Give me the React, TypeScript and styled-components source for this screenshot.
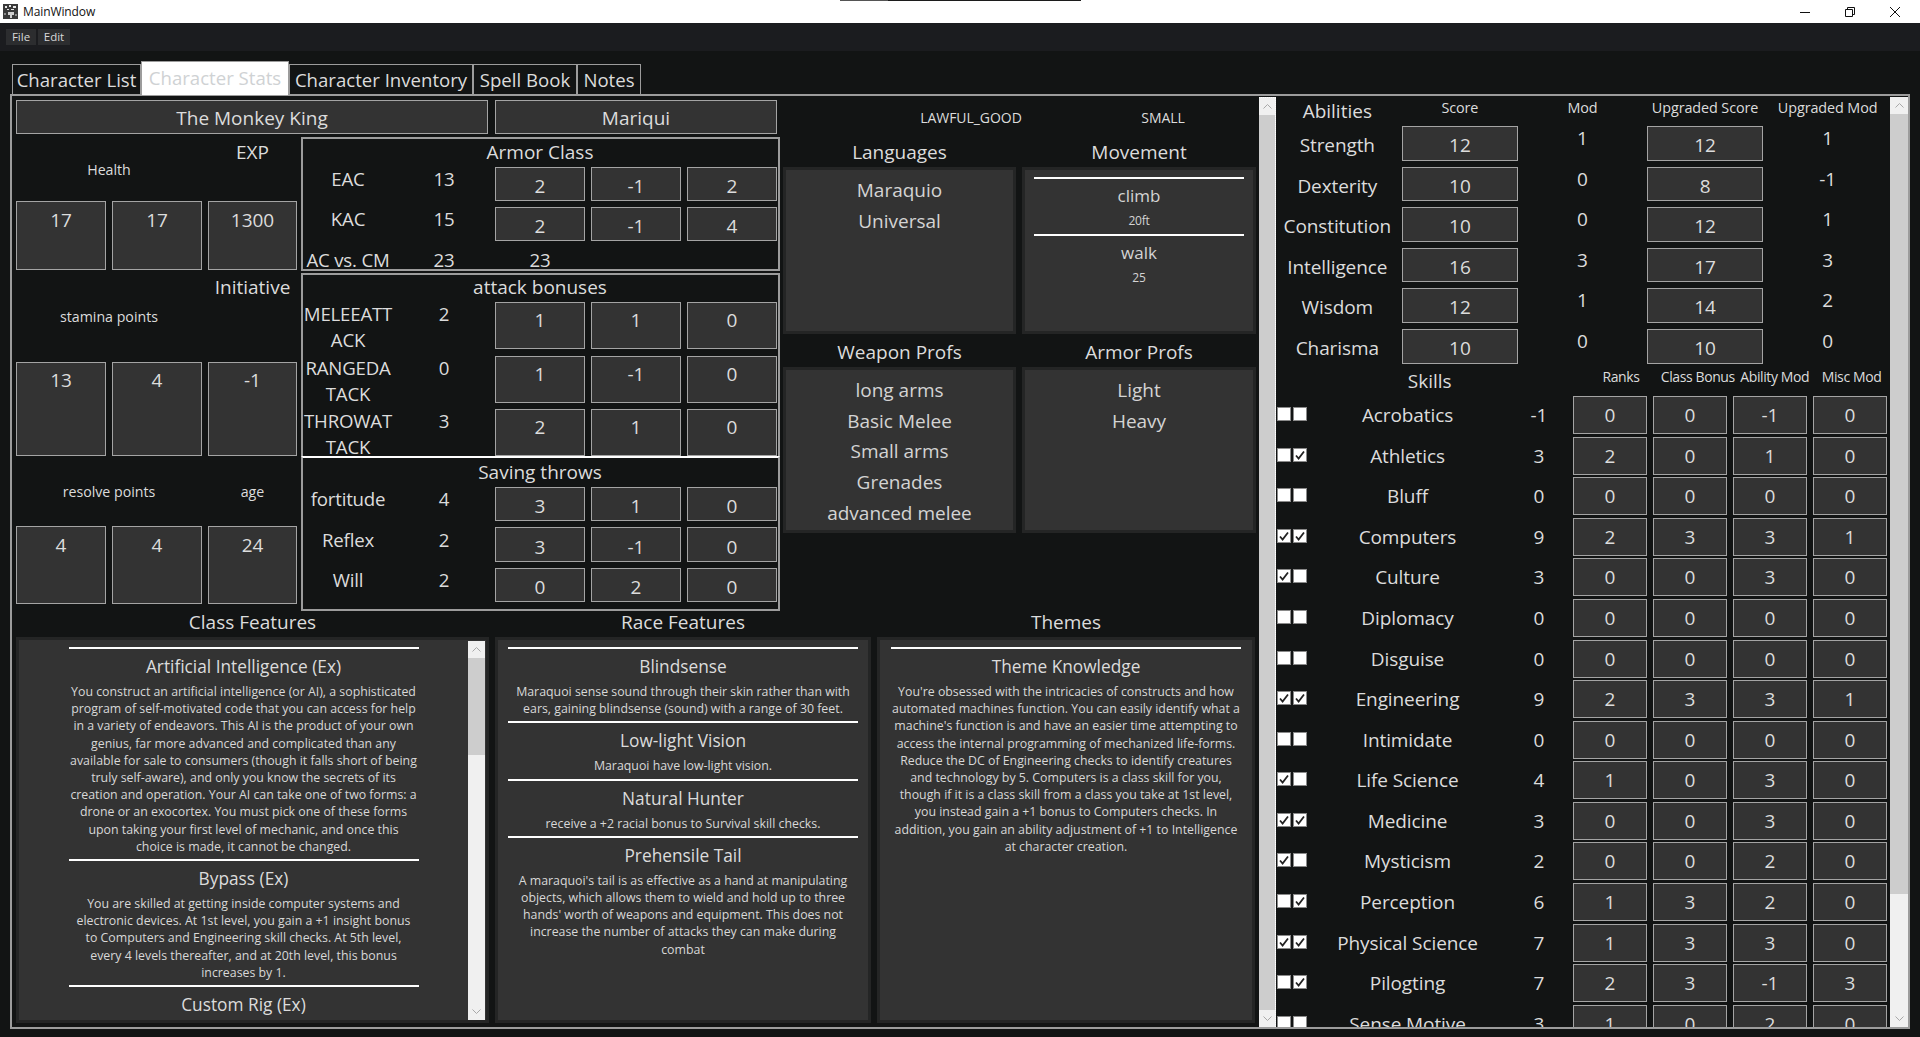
import styled, { createGlobalStyle } from "styled-components";

const GlobalStyle = createGlobalStyle`
    html, body { margin: 0; padding: 0; height: 100%; overflow: hidden; background: #121414; }
    body { font-family: "Open Sans", "Noto Sans", sans-serif; color: #dcdcdc; }
    * { box-sizing: border-box; }
`;

const Window = styled.div`
    position: relative;
    width: 1920px;
    height: 1037px;
    overflow: hidden;
    background: #121414;
`;

const TitleBar = styled.div`
    height: 23px;
    background: #fff;
    color: #111;
    display: flex;
    align-items: center;
    padding-left: 3px;
    font-size: 12px;
    letter-spacing: -0.1px;
`;

const TitleText = styled.span`
    margin-left: 5px;
`;

const TitleControls = styled.div`
    margin-left: auto;
    display: flex;
    align-items: center;
    padding-right: 3px;
`;

const ControlButton = styled.div`
    width: 45px;
    height: 23px;
    display: flex;
    align-items: center;
    justify-content: center;
`;

const DragStrip = styled.div`
    position: absolute;
    top: 0;
    left: 840px;
    width: 241px;
    height: 1px;
    background: linear-gradient(90deg, #555 0 48px, #1c1c1c 48px);
`;

const MenuBar = styled.div`
    height: 28px;
    background: #1b1c1f;
    display: flex;
    align-items: center;
    gap: 2px;
    padding: 0 6px;
`;

const MenuItem = styled.div<{ $w: number }>`
    width: ${p => p.$w}px;
    height: 16px;
    background: #2c2d2f;
    color: #d8d8d8;
    font-size: 11.5px;
    line-height: 16px;
    text-align: center;
`;

const TabBar = styled.div`
    position: relative;
    z-index: 1;
    display: flex;
    align-items: flex-end;
    height: 34px;
    margin: 10px 0 -1px 12px;
`;

const Tab = styled.div<{ $w: number; $active?: boolean }>`
    width: ${p => p.$w}px;
    height: ${p => (p.$active ? 34 : 31)}px;
    background: ${p => (p.$active ? "#fff" : "transparent")};
    color: ${p => (p.$active ? "#cfd2d4" : "#dcdcdc")};
    border: 1px solid #9c9c9c;
    border-bottom: none;
    font-size: 18.6px;
    line-height: ${p => (p.$active ? 32 : 30)}px;
    text-align: center;
    white-space: nowrap;
`;

const Pane = styled.div`
    margin-left: 10px;
    width: 1900px;
    height: 935px;
    border: 2px solid #9c9c9c;
    display: flex;
    overflow: hidden;
`;

const LeftArea = styled.div`
    width: 1247px;
    padding: 4px 0 0 4px;
    display: flex;
    flex-direction: column;
`;

const TopSection = styled.div`
    display: flex;
    height: 507px;
    gap: 3px;
`;

const SheetColumn = styled.div`
    width: 764px;
    display: flex;
    flex-direction: column;
    gap: 3px;
`;

const NameRow = styled.div`
    display: flex;
    gap: 7px;
    height: 34px;
`;

const Box = styled.div<{ $w?: number; $lh?: number }>`
    ${p => (p.$w ? `width: ${p.$w}px;` : "")}
    background: #333;
    border: 1px solid #a4a4a4;
    color: #dcdcdc;
    font-size: 19px;
    line-height: ${p => p.$lh ?? 36}px;
    text-align: center;
    overflow: hidden;
`;

const SheetBody = styled.div`
    display: flex;
    gap: 4px;
`;

const VitalsGrid = styled.div`
    width: 281px;
    display: grid;
    grid-template-columns: 90px 90px 89px;
    grid-template-rows: 64px 69px 92px 94px 70px 78px;
    column-gap: 6px;
`;

const VitalLabel = styled.div<{ $span?: number }>`
    ${p => (p.$span ? `grid-column: span ${p.$span};` : "")}
    align-self: center;
    text-align: center;
    font-size: 14.2px;
`;

const VitalHeading = styled.div<{ $top: number }>`
    align-self: start;
    padding-top: ${p => p.$top}px;
    text-align: center;
    font-size: 19px;
    line-height: 26px;
`;

const CombatColumn = styled.div`
    width: 479px;
    display: flex;
    flex-direction: column;
`;

const CombatPanel = styled.div<{ $rows: string; $open?: boolean; $white?: boolean; $gap?: number; $mt?: number }>`
    display: grid;
    grid-template-columns: repeat(5, 90px);
    grid-template-rows: ${p => p.$rows};
    column-gap: 6px;
    row-gap: ${p => p.$gap ?? 6}px;
    margin-top: ${p => p.$mt ?? 0}px;
    border: 2px solid #9c9c9c;
    ${p => (p.$open ? "border-bottom: none;" : "")}
    ${p => (p.$white ? "border-top-color: #fff;" : "")}
`;

const CombatTitle = styled.div<{ $lh?: number }>`
    grid-column: 1 / -1;
    text-align: center;
    font-size: 19px;
    line-height: ${p => p.$lh ?? 26}px;
    white-space: nowrap;
`;

const CombatLabel = styled.div<{ $lh?: number; $up?: number }>`
    align-self: start;
    margin-top: ${p => -(p.$up ?? 0)}px;
    text-align: center;
    font-size: 18.67px;
    letter-spacing: -0.2px;
    line-height: ${p => p.$lh ?? 24}px;
    white-space: nowrap;
`;

const SideColumn = styled.div`
    width: 473px;
    display: flex;
    flex-direction: column;
`;

const MetaRow = styled.div`
    height: 37px;
    margin-left: 92px;
    display: grid;
    grid-template-columns: 192px 192px;
    padding-bottom: 3px;
    align-items: center;
    font-size: 14px;
    letter-spacing: -0.05px;
    text-align: center;
`;

const ListGrid = styled.div`
    display: grid;
    grid-template-columns: 233px 234px;
    grid-template-rows: 30px 167px 33px 166px;
    column-gap: 6px;
`;

const SectionHeading = styled.div<{ $lh?: number }>`
    font-size: 19px;
    line-height: ${p => p.$lh ?? 30}px;
    text-align: center;
`;

const ListPanel = styled.div`
    background: #333;
    border: 3px solid #242525;
    padding-top: 5px;
    text-align: center;
    font-size: 19px;
    line-height: 30.7px;
    color: #d4d4d4;
`;

const MovePanel = styled(ListPanel)`
    padding: 7px 9px 0;
`;

const MoveItem = styled.div`
    border-top: 2px solid #fff;
    height: 57px;
`;

const MoveName = styled.div`
    font-size: 17px;
    line-height: 33px;
`;

const MoveValue = styled.div`
    font-size: 12px;
    line-height: 18px;
    letter-spacing: -0.2px;
`;

const FeatureHeadings = styled.div`
    display: grid;
    grid-template-columns: 473px 376px 378px;
    column-gap: 6px;
    height: 30px;
    font-size: 19px;
    line-height: 30px;
    text-align: center;
`;

const FeatureRow = styled.div`
    display: grid;
    grid-template-columns: 473px 376px 378px;
    column-gap: 6px;
    height: 386px;
`;

const FeaturePanel = styled.div`
    display: flex;
    background: #333;
    border: 3px solid #242525;
    overflow: hidden;
`;

const FeatureScroll = styled.div`
    flex: 1;
    padding-top: 7px;
    overflow: hidden;
`;

const FeatureItem = styled.div`
    width: 350px;
    margin: 0 auto;
    border-top: 2px solid #fff;
    padding-bottom: 4px;
    text-align: center;
`;

const FeatureName = styled.div`
    font-size: 17.3px;
    height: 34px;
    line-height: 35px;
    white-space: nowrap;
`;

const FeatureLine = styled.div`
    font-size: 12.35px;
    line-height: 17.2px;
    white-space: nowrap;
    color: #d8d8d8;
`;

const ScrollTrack = styled.div<{ $w: number; $inset?: boolean; $focus?: boolean }>`
    width: ${p => p.$w}px;
    flex: none;
    display: flex;
    flex-direction: column;
    background: #f0f0f0;
    ${p => (p.$inset ? "margin: 1px 1px 0 0;" : "margin-top: 1px;")}
    ${p => (p.$focus ? "border-top: 1px dotted #fff; border-right: 1px dotted #fff;" : "")}
`;

const ScrollButton = styled.div`
    height: 17px;
    flex: none;
    display: flex;
    align-items: center;
    justify-content: center;
    background: #f0f0f0;
`;

const ScrollThumb = styled.div<{ $size?: number }>`
    background: #cdcdcd;
    ${p => (p.$size ? `height: ${p.$size}px; flex: none;` : "flex: 1;")}
`;

const ScrollGap = styled.div`
    flex: 1;
`;

const RightArea = styled.div`
    width: 614px;
    padding-top: 1px;
    overflow: hidden;
`;

const AbilityGrid = styled.div`
    display: grid;
    grid-template-columns: repeat(5, 116.6px);
    grid-template-rows: 23px repeat(6, 34.6px);
    gap: 6px;
    padding-left: 3px;
`;

const AbilityHead = styled.div<{ $big?: boolean }>`
    text-align: center;
    font-size: ${p => (p.$big ? "19px" : "14.4px")};
    letter-spacing: ${p => (p.$big ? "0" : "-0.1px")};
    line-height: ${p => (p.$big ? "28px" : "22px")};
    white-space: nowrap;
`;

const AbilityName = styled.div`
    text-align: center;
    font-size: 19px;
    letter-spacing: -0.1px;
    line-height: 38px;
    white-space: nowrap;
`;

const ModValue = styled.div`
    text-align: center;
    font-size: 19px;
    line-height: 24px;
`;

const SkillHeader = styled.div`
    display: flex;
    height: 32.4px;
    padding-left: 1px;
`;

const SkillsTitle = styled.div`
    width: 306px;
    text-align: center;
    font-size: 19px;
    line-height: 34px;
`;

const SkillColumnHead = styled.div`
    width: 77px;
    text-align: center;
    font-size: 14px;
    letter-spacing: -0.4px;
    line-height: 26px;
    white-space: nowrap;
`;

const SkillList = styled.div`
    display: flex;
    flex-direction: column;
    gap: 6px;
`;

const SkillRow = styled.div`
    display: grid;
    grid-template-columns: 30px 201px 62px 1fr;
    height: 34.6px;
    flex: none;
    padding-left: 1px;
`;

const CheckPair = styled.div`
    display: flex;
    gap: 2px;
    padding-top: 11px;
`;

const CheckBox = styled.div`
    width: 14px;
    height: 14px;
    background: #fff;
    border: 1px solid #8a8a8a;
    display: flex;
    align-items: center;
    justify-content: center;
`;

const SkillName = styled.div`
    text-align: center;
    font-size: 19px;
    letter-spacing: -0.1px;
    line-height: 38px;
    white-space: nowrap;
`;

const SkillValue = styled.div`
    text-align: center;
    font-size: 19px;
    line-height: 38px;
`;

const SkillBoxes = styled.div`
    display: grid;
    grid-template-columns: repeat(4, 74px);
    column-gap: 6px;
    margin-left: 3px;
`;

const AppIcon = () => (
    <svg width="15" height="15" viewBox="0 0 15 15">
        <rect width="15" height="15" fill="#3a3a3a" />
        <path d="M2 2h2v2H2zM6 1h2v2H6zM10 2h3v2h-3zM4 5h2v1H4zM8 5h3v1H8z" fill="#e8e8e8" />
        <path d="M5 8h6v3H9v3H7v-3H5z" fill="#d0d0d0" />
        <path d="M1 9h2v2H1zM12 10h2v2h-2z" fill="#8a8a8a" />
    </svg>
);

const Minimize = () => (
    <svg width="10" height="10" viewBox="0 0 10 10"><path d="M0 5.5h10" stroke="#111" fill="none" /></svg>
);

const Restore = () => (
    <svg width="10" height="10" viewBox="0 0 10 10">
        <path d="M.5 2.5h7v7h-7zM2.5 2.5v-2h7v7h-2" stroke="#111" fill="none" />
    </svg>
);

const Close = () => (
    <svg width="10" height="10" viewBox="0 0 10 10"><path d="M0 0l10 10M10 0L0 10" stroke="#111" fill="none" /></svg>
);

const Chevron = ({ down }: { down?: boolean }) => (
    <svg width="9" height="5" viewBox="0 0 9 5">
        <path d={down ? "M.5 .5l4 4 4-4" : "M.5 4.5l4-4 4 4"} stroke="#a8a8a8" fill="none" />
    </svg>
);

const Tick = () => (
    <svg width="12" height="12" viewBox="0 0 12 12">
        <path d="M2 6.5l2.6 3L10 2.5" stroke="#222" strokeWidth="1.8" fill="none" />
    </svg>
);

const Scrollbar = ({ thumb, width = 17, inset, focus }: { thumb?: number; width?: number; inset?: boolean; focus?: boolean }) => (
    <ScrollTrack $w={width} $inset={inset} $focus={focus}>
        <ScrollButton><Chevron /></ScrollButton>
        <ScrollThumb $size={thumb} />
        {thumb ? <ScrollGap /> : null}
        <ScrollButton><Chevron down /></ScrollButton>
    </ScrollTrack>
);

const tabs: [string, number][] = [
    ["Character List", 129],
    ["Character Stats", 148],
    ["Character Inventory", 184],
    ["Spell Book", 104],
    ["Notes", 64],
];

const abilities = [
    ["Strength", "12", "1", "12", "1"],
    ["Dexterity", "10", "0", "8", "-1"],
    ["Constitution", "10", "0", "12", "1"],
    ["Intelligence", "16", "3", "17", "3"],
    ["Wisdom", "12", "1", "14", "2"],
    ["Charisma", "10", "0", "10", "0"],
];

type Skill = { name: string; a: boolean; b: boolean; total: string; parts: string[] };

const skill = (name: string, a: number, b: number, total: string, parts: string): Skill => ({
    name, a: !!a, b: !!b, total, parts: parts.split(" "),
});

const skills: Skill[] = [
    skill("Acrobatics", 0, 0, "-1", "0 0 -1 0"),
    skill("Athletics", 0, 1, "3", "2 0 1 0"),
    skill("Bluff", 0, 0, "0", "0 0 0 0"),
    skill("Computers", 1, 1, "9", "2 3 3 1"),
    skill("Culture", 1, 0, "3", "0 0 3 0"),
    skill("Diplomacy", 0, 0, "0", "0 0 0 0"),
    skill("Disguise", 0, 0, "0", "0 0 0 0"),
    skill("Engineering", 1, 1, "9", "2 3 3 1"),
    skill("Intimidate", 0, 0, "0", "0 0 0 0"),
    skill("Life Science", 1, 0, "4", "1 0 3 0"),
    skill("Medicine", 1, 1, "3", "0 0 3 0"),
    skill("Mysticism", 1, 0, "2", "0 0 2 0"),
    skill("Perception", 0, 1, "6", "1 3 2 0"),
    skill("Physical Science", 1, 1, "7", "1 3 3 0"),
    skill("Pilogting", 0, 1, "7", "2 3 -1 3"),
    skill("Sense Motive", 0, 0, "3", "1 0 2 0"),
];

type Feature = { name: string; lines: string[] };

const classFeatures: Feature[] = [
    {
        name: "Artificial Intelligence (Ex)",
        lines: [
            "You construct an artificial intelligence (or AI), a sophisticated",
            "program of self-motivated code that you can access for help",
            "in a variety of endeavors. This AI is the product of your own",
            "genius, far more advanced and complicated than any",
            "available for sale to consumers (though it falls short of being",
            "truly self-aware), and only you know the secrets of its",
            "creation and operation. Your AI can take one of two forms: a",
            "drone or an exocortex. You must pick one of these forms",
            "upon taking your first level of mechanic, and once this",
            "choice is made, it cannot be changed.",
        ],
    },
    {
        name: "Bypass (Ex)",
        lines: [
            "You are skilled at getting inside computer systems and",
            "electronic devices. At 1st level, you gain a +1 insight bonus",
            "to Computers and Engineering skill checks. At 5th level,",
            "every 4 levels thereafter, and at 20th level, this bonus",
            "increases by 1.",
        ],
    },
    { name: "Custom Rig (Ex)", lines: [] },
];

const raceFeatures: Feature[] = [
    {
        name: "Blindsense",
        lines: [
            "Maraquoi sense sound through their skin rather than with",
            "ears, gaining blindsense (sound) with a range of 30 feet.",
        ],
    },
    { name: "Low-light Vision", lines: ["Maraquoi have low-light vision."] },
    { name: "Natural Hunter", lines: ["receive a +2 racial bonus to Survival skill checks."] },
    {
        name: "Prehensile Tail",
        lines: [
            "A maraquoi's tail is as effective as a hand at manipulating",
            "objects, which allows them to wield and hold up to three",
            "hands' worth of weapons and equipment. This does not",
            "increase the number of attacks they can make during",
            "combat",
        ],
    },
];

const themeFeatures: Feature[] = [
    {
        name: "Theme Knowledge",
        lines: [
            "You're obsessed with the intricacies of constructs and how",
            "automated machines function. You can easily identify what a",
            "machine's function is and have an easier time attempting to",
            "access the internal programming of mechanized life-forms.",
            "Reduce the DC of Engineering checks to identify creatures",
            "and technology by 5. Computers is a class skill for you,",
            "though if it is a class skill from a class you take at 1st level,",
            "you instead gain a +1 bonus to Computers checks. In",
            "addition, you gain an ability adjustment of +1 to Intelligence",
            "at character creation.",
        ],
    },
];

const FeatureList = ({ items }: { items: Feature[] }) => (
    <FeatureScroll>
        {items.map(f => (
            <FeatureItem key={f.name}>
                <FeatureName>{f.name}</FeatureName>
                {f.lines.map(l => <FeatureLine key={l}>{l}</FeatureLine>)}
            </FeatureItem>
        ))}
    </FeatureScroll>
);

const BoxTriple = ({ values, lh }: { values: string[]; lh?: number }) => (
    <>
        {values.map((v, i) => <Box key={i} $lh={lh}>{v}</Box>)}
    </>
);

function AbilityRowCells({ name, score, mod, upScore, upMod }: { name: string; score: string; mod: string; upScore: string; upMod: string }) {
    return (
        <>
            <AbilityName>{name}</AbilityName>
            <Box>{score}</Box>
            <ModValue>{mod}</ModValue>
            <Box>{upScore}</Box>
            <ModValue>{upMod}</ModValue>
        </>
    );
}

export default function App() {
    return (
        <Window>
            <GlobalStyle />
            <TitleBar>
                <AppIcon />
                <TitleText>MainWindow</TitleText>
                <TitleControls>
                    <ControlButton><Minimize /></ControlButton>
                    <ControlButton><Restore /></ControlButton>
                    <ControlButton><Close /></ControlButton>
                </TitleControls>
            </TitleBar>
            <DragStrip />
            <MenuBar>
                <MenuItem $w={30}>File</MenuItem>
                <MenuItem $w={32}>Edit</MenuItem>
            </MenuBar>
            <TabBar>
                {tabs.map(([label, w]) => (
                    <Tab key={label} $w={w} $active={label === "Character Stats"}>{label}</Tab>
                ))}
            </TabBar>
            <Pane>
                <LeftArea>
                    <TopSection>
                        <SheetColumn>
                            <NameRow>
                                <Box $w={472} $lh={34}>The Monkey King</Box>
                                <Box $w={282} $lh={34}>Mariqui</Box>
                            </NameRow>
                            <SheetBody>
                                <VitalsGrid>
                                    <VitalLabel $span={2}>Health</VitalLabel>
                                    <VitalHeading $top={2}>EXP</VitalHeading>
                                    <Box>17</Box>
                                    <Box>17</Box>
                                    <Box>1300</Box>
                                    <VitalLabel $span={2}>stamina points</VitalLabel>
                                    <VitalHeading $top={4}>Initiative</VitalHeading>
                                    <Box $lh={34}>13</Box>
                                    <Box $lh={34}>4</Box>
                                    <Box $lh={34}>-1</Box>
                                    <VitalLabel $span={2}>resolve points</VitalLabel>
                                    <VitalLabel>age</VitalLabel>
                                    <Box>4</Box>
                                    <Box>4</Box>
                                    <Box>24</Box>
                                </VitalsGrid>
                                <CombatColumn>
                                    <CombatPanel $rows="22px 34px 34px 22px">
                                        <CombatTitle>Armor Class</CombatTitle>
                                        <CombatLabel>EAC</CombatLabel>
                                        <CombatLabel>13</CombatLabel>
                                        <BoxTriple values={["2", "-1", "2"]} />
                                        <CombatLabel>KAC</CombatLabel>
                                        <CombatLabel>15</CombatLabel>
                                        <BoxTriple values={["2", "-1", "4"]} />
                                        <CombatLabel $lh={26}>AC vs. CM</CombatLabel>
                                        <CombatLabel $lh={26}>23</CombatLabel>
                                        <CombatLabel $lh={26}>23</CombatLabel>
                                    </CombatPanel>
                                    <CombatPanel $rows="20.5px 47px 47px 47px" $open $gap={6.5} $mt={2}>
                                        <CombatTitle $lh={24}>attack bonuses</CombatTitle>
                                        <CombatLabel $lh={26} $up={1}>MELEEATT<br />ACK</CombatLabel>
                                        <CombatLabel $lh={26} $up={1}>2</CombatLabel>
                                        <BoxTriple values={["1", "1", "0"]} lh={34} />
                                        <CombatLabel $lh={26} $up={1}>RANGEDA<br />TACK</CombatLabel>
                                        <CombatLabel $lh={26} $up={1}>0</CombatLabel>
                                        <BoxTriple values={["1", "-1", "0"]} lh={34} />
                                        <CombatLabel $lh={26} $up={1}>THROWAT<br />TACK</CombatLabel>
                                        <CombatLabel $lh={26} $up={1}>3</CombatLabel>
                                        <BoxTriple values={["2", "1", "0"]} lh={34} />
                                    </CombatPanel>
                                    <CombatPanel $rows="23px 34px 34.6px 34px 1px" $white $gap={6}>
                                        <CombatTitle $lh={28}>Saving throws</CombatTitle>
                                        <CombatLabel>fortitude</CombatLabel>
                                        <CombatLabel>4</CombatLabel>
                                        <BoxTriple values={["3", "1", "0"]} lh={37} />
                                        <CombatLabel $lh={25}>Reflex</CombatLabel>
                                        <CombatLabel $lh={25}>2</CombatLabel>
                                        <BoxTriple values={["3", "-1", "0"]} lh={38} />
                                        <CombatLabel>Will</CombatLabel>
                                        <CombatLabel>2</CombatLabel>
                                        <BoxTriple values={["0", "2", "0"]} lh={37} />
                                    </CombatPanel>
                                </CombatColumn>
                            </SheetBody>
                        </SheetColumn>
                        <SideColumn>
                            <MetaRow>
                                <span>LAWFUL_GOOD</span>
                                <span>SMALL</span>
                            </MetaRow>
                            <ListGrid>
                                <SectionHeading>Languages</SectionHeading>
                                <SectionHeading>Movement</SectionHeading>
                                <ListPanel>
                                    <div>Maraquio</div>
                                    <div>Universal</div>
                                </ListPanel>
                                <MovePanel>
                                    <MoveItem>
                                        <MoveName>climb</MoveName>
                                        <MoveValue>20ft</MoveValue>
                                    </MoveItem>
                                    <MoveItem>
                                        <MoveName>walk</MoveName>
                                        <MoveValue>25</MoveValue>
                                    </MoveItem>
                                </MovePanel>
                                <SectionHeading $lh={36}>Weapon Profs</SectionHeading>
                                <SectionHeading $lh={36}>Armor Profs</SectionHeading>
                                <ListPanel>
                                    <div>long arms</div>
                                    <div>Basic Melee</div>
                                    <div>Small arms</div>
                                    <div>Grenades</div>
                                    <div>advanced melee</div>
                                </ListPanel>
                                <ListPanel>
                                    <div>Light</div>
                                    <div>Heavy</div>
                                </ListPanel>
                            </ListGrid>
                        </SideColumn>
                    </TopSection>
                    <FeatureHeadings>
                        <div>Class Features</div>
                        <div>Race Features</div>
                        <div>Themes</div>
                    </FeatureHeadings>
                    <FeatureRow>
                        <FeaturePanel>
                            <FeatureList items={classFeatures} />
                            <Scrollbar thumb={97} inset />
                        </FeaturePanel>
                        <FeaturePanel>
                            <FeatureList items={raceFeatures} />
                        </FeaturePanel>
                        <FeaturePanel>
                            <FeatureList items={themeFeatures} />
                        </FeaturePanel>
                    </FeatureRow>
                </LeftArea>
                <Scrollbar focus />
                <RightArea>
                    <AbilityGrid>
                        <AbilityHead $big>Abilities</AbilityHead>
                        <AbilityHead>Score</AbilityHead>
                        <AbilityHead>Mod</AbilityHead>
                        <AbilityHead>Upgraded Score</AbilityHead>
                        <AbilityHead>Upgraded Mod</AbilityHead>
                        {abilities.map(([name, score, mod, upScore, upMod]) => (
                            <AbilityRowCells key={name} name={name} score={score} mod={mod} upScore={upScore} upMod={upMod} />
                        ))}
                    </AbilityGrid>
                    <SkillHeader>
                        <SkillsTitle>Skills</SkillsTitle>
                        <SkillColumnHead>Ranks</SkillColumnHead>
                        <SkillColumnHead>Class Bonus</SkillColumnHead>
                        <SkillColumnHead>Ability Mod</SkillColumnHead>
                        <SkillColumnHead>Misc Mod</SkillColumnHead>
                    </SkillHeader>
                    <SkillList>
                        {skills.map(s => (
                            <SkillRow key={s.name}>
                                <CheckPair>
                                    <CheckBox>{s.a ? <Tick /> : null}</CheckBox>
                                    <CheckBox>{s.b ? <Tick /> : null}</CheckBox>
                                </CheckPair>
                                <SkillName>{s.name}</SkillName>
                                <SkillValue>{s.total}</SkillValue>
                                <SkillBoxes>
                                    {s.parts.map((v, i) => <Box key={i}>{v}</Box>)}
                                </SkillBoxes>
                            </SkillRow>
                        ))}
                    </SkillList>
                </RightArea>
                <Scrollbar thumb={780} width={18} />
            </Pane>
        </Window>
    );
}
